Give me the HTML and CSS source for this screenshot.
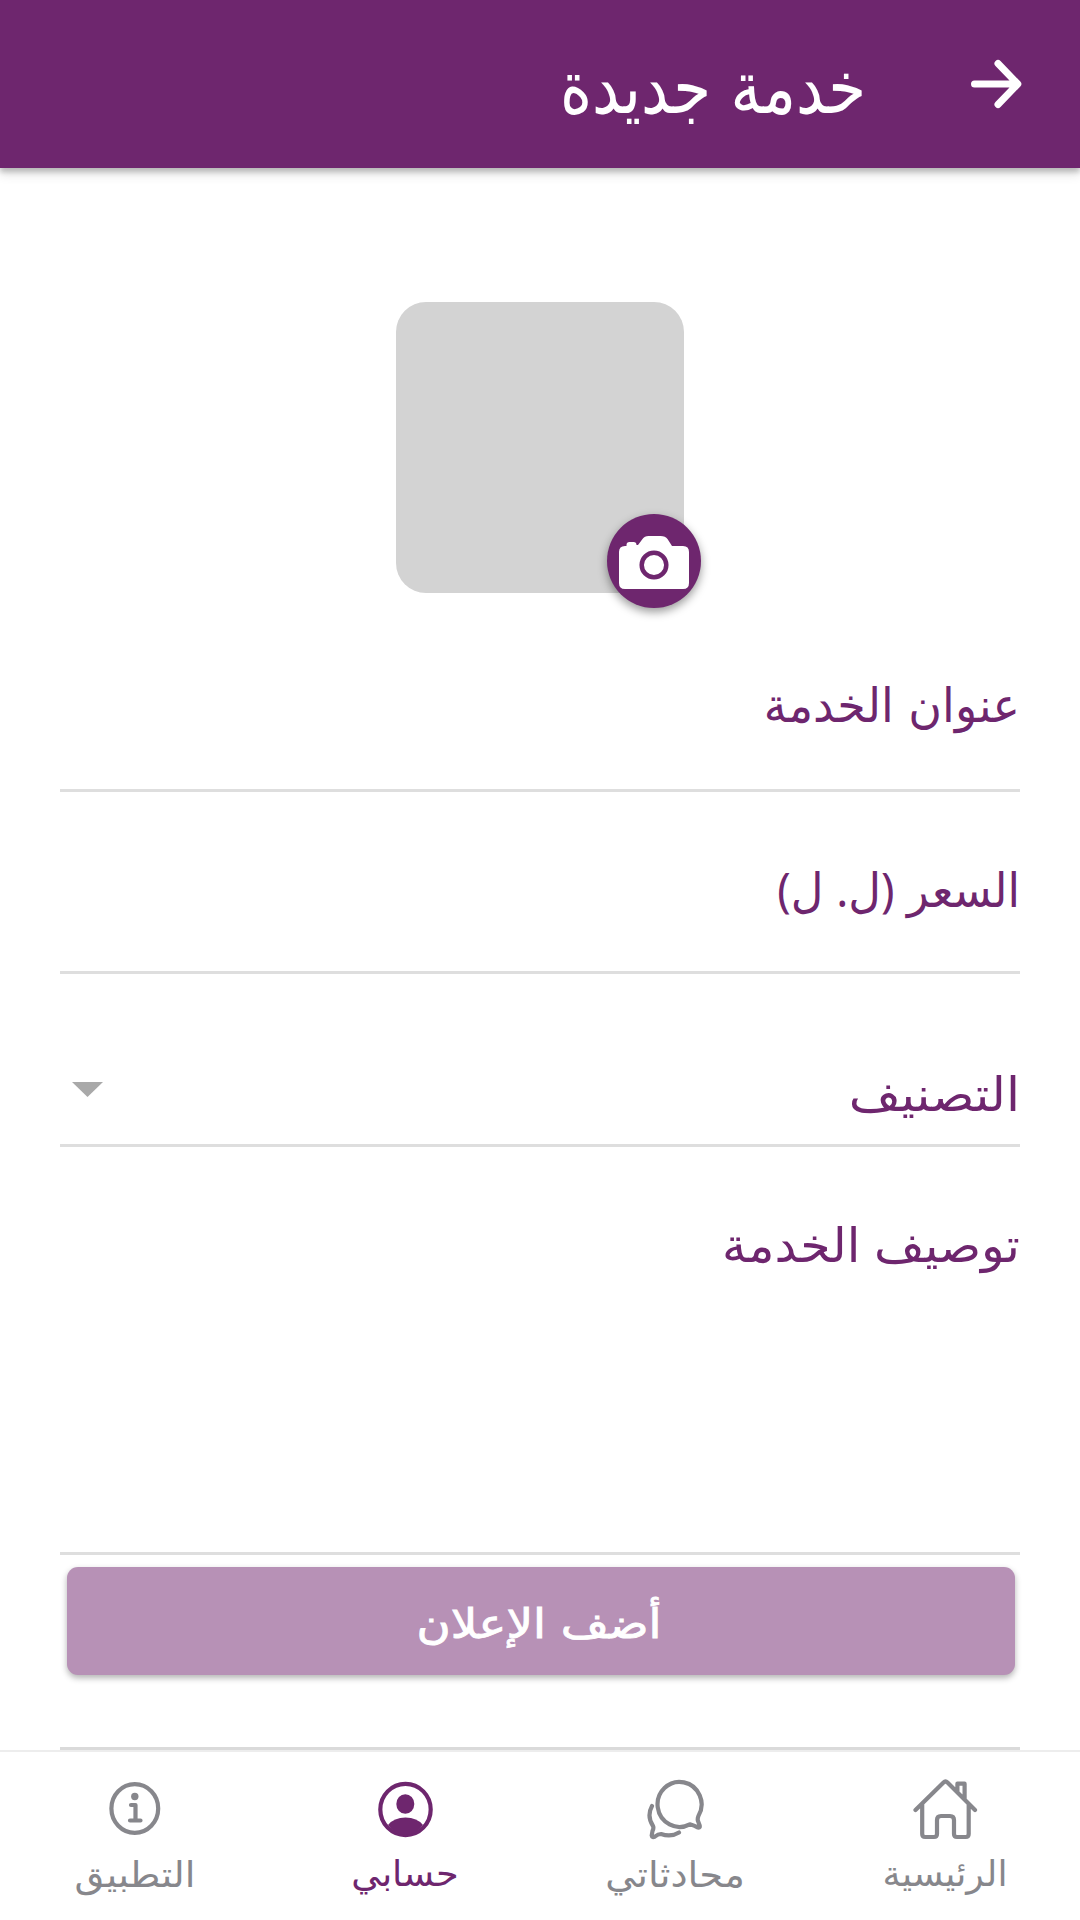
FILE: index.html
```html
<!DOCTYPE html>
<html lang="ar" dir="rtl">
<head>
<meta charset="utf-8">
<title>خدمة جديدة</title>
<link rel="stylesheet" href="styles.css">
</head>
<body>
<header class="app-bar">
  <svg class="back" viewBox="0 0 52 50" aria-hidden="true"><path d="M4.500 25H47.500M28 4.500 47.800 25 28 45.500"/></svg>
  <h1 class="title text">خدمة جديدة</h1>
</header>
<main class="form">
  <div class="photo-row">
    <div class="photo">
      <button class="camera" aria-label="صورة">
        <svg viewBox="0 0 94 94" aria-hidden="true">
          <path class="camera-body" d="M18 32h1.500v-1q0-3 3-3h4q3 0 3 3h1.500l4.500-6q2-3 6-3h12q5 0 7 3l4.500 7H76q6 0 6 6v31q0 6-6 6H18q-6 0-6-6V38q0-6 6-6z"/>
          <circle class="camera-lens" cx="47" cy="51" r="12.3"/>
        </svg>
      </button>
    </div>
  </div>
  <div class="field field-title"><label class="text">عنوان الخدمة</label></div>
  <div class="field field-price"><label class="text">السعر (ل. ل)</label></div>
  <div class="field field-category"><label class="text">التصنيف</label><span class="caret"></span></div>
  <div class="field field-description"><label class="text">توصيف الخدمة</label></div>
  <button class="submit"><span class="text">أضف الإعلان</span></button>
  <div class="divider"></div>
</main>
<nav class="tabs">
  <a class="tab home">
    <svg viewBox="0 0 64 64" aria-hidden="true"><path d="M2.500 32 30.500 4.500q2-2 4 0L62 32M9.200 26v30q0 3 3 3H21q3 0 3-3V42q0-4 4-4h9q4 0 4 4v14q0 3 3 3h8.700q3 0 3-3V26M44.400 14V5.700h7.200V21"/></svg>
    <span class="text">الرئيسية</span>
  </a>
  <a class="tab chats">
    <svg viewBox="0 0 64 64" aria-hidden="true"><path d="M55.400 38A22 22.500 0 1 0 46.800 46.300Q51 47.500 55 49.500Q57.500 50 56.500 47L54.800 42.500Q54.500 40 55.400 38M9 28Q3.500 38 10 48Q11 50 9.500 53L8.700 57.500Q9 60 12 58.500Q15 56 18 56Q28 59.500 36 54.500"/></svg>
    <span class="text">محادثاتي</span>
  </a>
  <a class="tab account active">
    <svg viewBox="0 0 64 64" aria-hidden="true"><ellipse cx="32.500" cy="31.500" rx="25.200" ry="25.600"/><ellipse class="solid" cx="32.300" cy="26" rx="9" ry="9.800"/><path class="solid" d="M15 47Q21 39.500 32.500 39.500T50 47Q43 57 32.500 57T15 47z"/></svg>
    <span class="text">حسابي</span>
  </a>
  <a class="tab about">
    <svg viewBox="0 0 64 64" aria-hidden="true"><ellipse cx="31.800" cy="30.500" rx="23.400" ry="24.300"/><circle class="solid" cx="31.800" cy="18.500" r="3.700"/><path d="M28 27h4.500v15.500M27 42.500h10.500"/></svg>
    <span class="text">التطبيق</span>
  </a>
</nav>
</body>
</html>
```
FILE: styles.css
```css
* { box-sizing: border-box; }

body {
  margin: 0;
  width: 1080px;
  height: 1920px;
  display: flex;
  flex-direction: column;
  background: #fff;
  font-family: "DejaVu Sans", sans-serif;
  color: #6e266e;
  overflow: hidden;
}

button { border: 0; padding: 0; font-family: inherit; }

/* Text is stretched vertically around its baseline */
.text {
  display: block;
  line-height: 60px;
  white-space: nowrap;
  transform: scaleY(var(--stretch, 1));
  transform-origin: 50% calc(50% + 0.346em);
}

.app-bar {
  flex: none;
  height: 168px;
  display: flex;
  align-items: flex-start;
  gap: 104px;
  padding: 59px 58px 0;
  background: #6e266e;
  color: #fff;
  box-shadow: 0 4px 5px rgba(0, 0, 0, 0.2), 0 6px 11px rgba(0, 0, 0, 0.12);
}

.back {
  width: 52px;
  height: 50px;
  fill: none;
  stroke: #fff;
  stroke-width: 7;
  stroke-linecap: round;
  stroke-linejoin: round;
}

.title {
  --stretch: 1.2;
  margin: 3px 0 0;
  font-size: 61.2px;
  font-weight: 400;
}

.form { flex: 1; padding: 0 60px; display: flex; flex-direction: column; }

.photo-row {
  height: 492px;
  padding-top: 134px;
  display: flex;
  justify-content: center;
}

.photo {
  position: relative;
  width: 288px;
  height: 290.5px;
  border-radius: 30px;
  background: #d3d3d3;
}

.camera {
  position: absolute;
  right: -17px;
  bottom: -15px;
  width: 94px;
  height: 94px;
  border-radius: 50%;
  background: #6e266e;
  box-shadow: 0 4px 10px rgba(0, 0, 0, 0.4);
}

.camera svg { display: block; width: 94px; height: 94px; }
.camera-body { fill: #fff; }
.camera-lens { fill: none; stroke: #6e266e; stroke-width: 4.5; }

.field {
  display: flex;
  justify-content: space-between;
  border-bottom: 3px solid #dedede;
}

.field-title { height: 132px; padding-top: 17px; font-size: 46px; --stretch: 1.03; }
.field-price { height: 182px; padding-top: 69px; font-size: 45px; word-spacing: 1px; font-family: "Noto Sans", "DejaVu Sans", sans-serif; --stretch: 1.05; }
.field-category { height: 173px; padding-top: 89px; font-size: 50.5px; --stretch: 0.94; }
.field-description { height: 408px; padding-top: 65px; font-size: 49px; word-spacing: -2px; --stretch: 0.97; }

.caret {
  width: 31px;
  height: 15px;
  margin: 19px 0 0 12px;
  background: #a9a9a9;
  clip-path: polygon(0 0, 100% 0, 50% 100%);
}

.submit {
  flex: none;
  height: 108px;
  margin: 12px 5px 0 7px;
  display: flex;
  justify-content: center;
  padding: 24px 4px 0 0;
  border-radius: 11px;
  background: #b791b6;
  color: #fff;
  font-size: 46.6px;
  -webkit-text-stroke: 1px #fff;
  --stretch: 0.88;
  box-shadow: 0 3px 6px rgba(0, 0, 0, 0.3);
}

.divider { margin-top: auto; height: 3px; background: #dadada; }

.tabs {
  flex: none;
  height: 170px;
  display: grid;
  grid-template-columns: repeat(4, 1fr);
  border-top: 2px solid #ededed;
}

.tab {
  display: flex;
  flex-direction: column;
  align-items: center;
  padding-top: 26px;
  color: #87878c;
}

.tab .text { margin-top: 2px; }

.tab svg {
  width: 64px;
  height: 64px;
  overflow: visible;
  fill: none;
  stroke: currentColor;
  stroke-width: 4.2;
  stroke-linecap: round;
  stroke-linejoin: round;
}

.tab .solid { fill: currentColor; stroke: none; }
.active { color: #6e266e; }
.home { font-size: 36.3px; --stretch: 0.98; }
.chats { font-size: 38.5px; --stretch: 0.92; }
.account { font-size: 36.7px; --stretch: 0.97; }
.about { font-size: 38.5px; --stretch: 0.92; }
```
